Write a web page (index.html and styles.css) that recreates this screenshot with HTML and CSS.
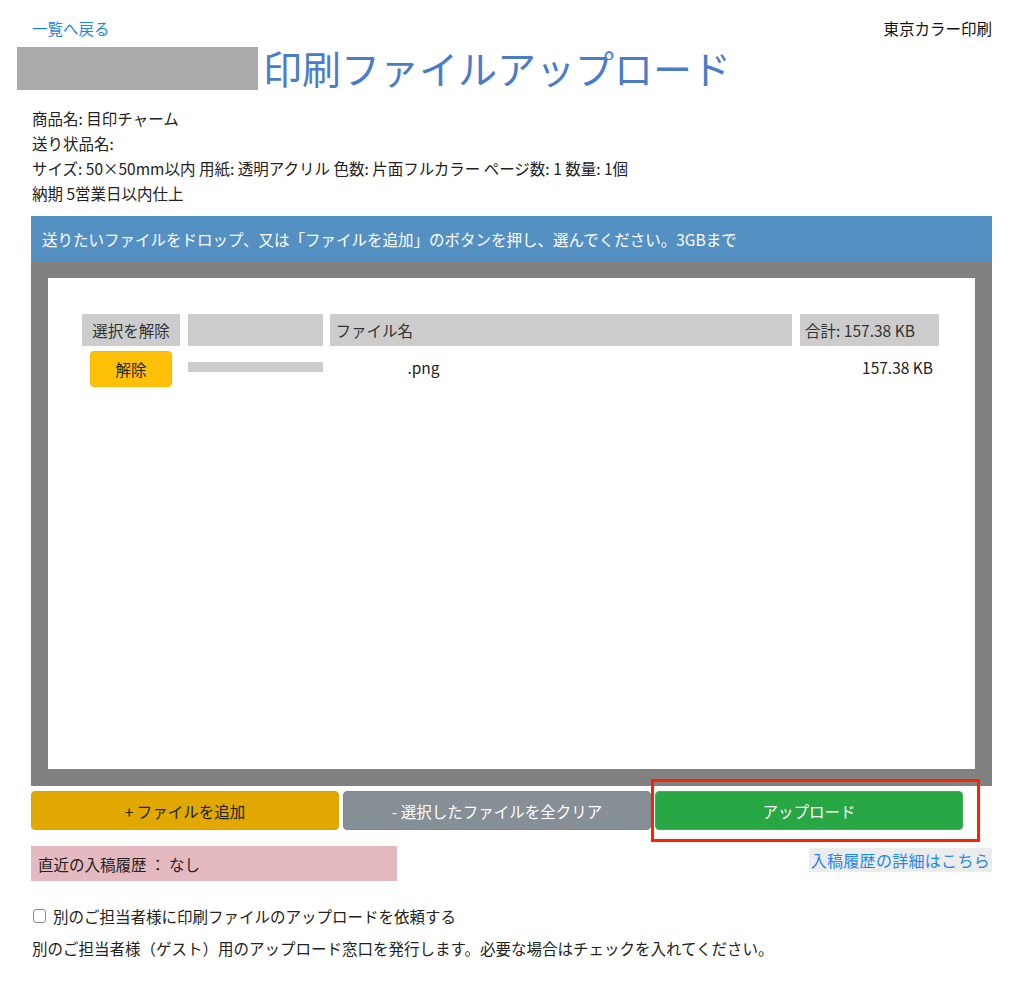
FILE: index.html
```html
<!DOCTYPE html>
<html lang="ja">
<head>
  <meta charset="UTF-8">
  <meta name="viewport" content="width=device-width, initial-scale=1.0">
  <title>印刷ファイルアップロード</title>
  <link rel="stylesheet" href="styles.css">
</head>
<body>
  <div class="page">
    <div class="topbar">
      <a class="back-link" href="#">一覧へ戻る</a>
      <span class="shop-name">東京カラー印刷</span>
    </div>

    <h1 class="title">
      <span class="title-mask"></span>
      <span class="title-text">印刷ファイルアップロード</span>
    </h1>

    <div class="order-info">
      <p>商品名: 目印チャーム</p>
      <p>送り状品名:</p>
      <p>サイズ: 50×50mm以内 用紙: 透明アクリル 色数: 片面フルカラー ページ数: 1 数量: 1個</p>
      <p>納期 5営業日以内仕上</p>
    </div>

    <div class="drop-notice">送りたいファイルをドロップ、又は「ファイルを追加」のボタンを押し、選んでください。3GBまで</div>

    <div class="drop-frame">
      <div class="drop-area">
        <div class="file-table">
          <div class="cell head head-center">選択を解除</div>
          <div class="cell head"></div>
          <div class="cell head">ファイル名</div>
          <div class="cell head">合計: 157.38 KB</div>

          <div class="cell row-center"><button class="btn-remove">解除</button></div>
          <div class="cell file-cell"><span class="thumb-mask"></span></div>
          <div class="cell file-cell"><span class="name-mask"></span>.png</div>
          <div class="cell file-cell size">157.38 KB</div>
        </div>
      </div>
    </div>

    <div class="actions">
      <button class="btn btn-add">+ ファイルを追加</button>
      <button class="btn btn-clear">- 選択したファイルを全クリア</button>
      <button class="btn btn-upload">アップロード</button>
      <span class="highlight"></span>
    </div>

    <div class="history">
      <div class="history-box">直近の入稿履歴 ： なし</div>
      <a class="history-link" href="#">入稿履歴の詳細はこちら</a>
    </div>

    <label class="guest-check">
      <input type="checkbox">
      <span>別のご担当者様に印刷ファイルのアップロードを依頼する</span>
    </label>
    <p class="guest-note">別のご担当者様（ゲスト）用のアップロード窓口を発行します。必要な場合はチェックを入れてください。</p>
  </div>
</body>
</html>
```

FILE: styles.css
```css
* {
  box-sizing: border-box;
  margin: 0;
  padding: 0;
}

body {
  font-family: "Noto Sans CJK JP", "Noto Sans", sans-serif;
  font-size: 15.5px;
  color: #222;
  background: #fff;
}

.page {
  padding: 18px 32px 0 31px;
}

.topbar {
  display: flex;
  justify-content: space-between;
  align-items: center;
  height: 20px;
  line-height: 20px;
}

.back-link {
  color: #1f86ee;
  text-decoration: none;
  margin-left: 1px;
}

.shop-name {
  color: #111;
}

.title {
  display: flex;
  align-items: center;
  gap: 5px;
  margin: 9px 0 0 -14px;
  height: 43px;
  font-size: 39px;
  font-weight: normal;
  line-height: 43px;
  color: #4a7cc8;
}

.title-mask {
  display: block;
  width: 241px;
  height: 43px;
  background: #aaaaaa;
}

.title-text {
  position: relative;
  top: -1px;
}

.order-info {
  margin-top: 16px;
  padding-left: 1px;
}

.order-info p {
  line-height: 25px;
}

.drop-notice {
  margin-top: 10px;
  height: 46px;
  line-height: 46px;
  padding-left: 11px;
  background: #5590c3;
  color: #fff;
}

.drop-frame {
  background: #818181;
  padding: 16px 17px 17px 17px;
}

.drop-area {
  background: #fff;
  height: 491px;
  padding: 36px 0 0 34px;
}

.file-table {
  display: grid;
  grid-template-columns: 98px 135px 462px 139px;
  column-gap: 7.7px;
  row-gap: 5px;
  grid-template-rows: 32px 36px;
}

.cell {
  display: flex;
  align-items: center;
  padding: 0 5px;
}

.file-cell {
  padding-bottom: 4px;
}

.head {
  background: #cccccc;
  color: #333;
}

.head-center,
.row-center {
  justify-content: center;
}

.btn-remove {
  width: 82px;
  height: 36px;
  border: 1px solid #f5b800;
  border-radius: 4px;
  background: #ffc107;
  color: #222;
  font: inherit;
}

.thumb-mask {
  display: block;
  width: calc(100% + 10px);
  margin: 0 -5px;
  height: 10px;
  background: #cccccc;
}

.name-mask {
  display: inline-block;
  width: 72px;
}

.size {
  justify-content: flex-end;
  padding-right: 6px;
}

.actions {
  position: relative;
  display: flex;
  gap: 4px;
  margin-top: 5px;
}

.btn {
  width: 308px;
  height: 39px;
  border: 1px solid transparent;
  border-radius: 4px;
  font: inherit;
  color: #fff;
}

.btn-add {
  background: #e0a800;
  border-color: #d9a406;
  color: #222;
}

.btn-clear {
  background: #868e96;
  border-color: #7f878f;
}

.btn-upload {
  background: #28a745;
  border-color: #3cb35a;
}

/* annotation frame around the upload button */
.highlight {
  position: absolute;
  left: 620px;
  top: -12px;
  width: 329px;
  height: 63px;
  border: 3px solid #ff2200;
  pointer-events: none;
}

.history {
  display: flex;
  justify-content: space-between;
  align-items: flex-start;
  margin-top: 16px;
}

.history-box {
  width: 366px;
  height: 35px;
  line-height: 37px;
  padding-left: 7px;
  background: #e5b9c0;
  color: #222;
}

.history-link {
  margin-top: 2px;
  height: 24px;
  line-height: 24px;
  padding: 0 2px;
  background: #ececec;
  color: #1f86ee;
  text-decoration: none;
  font-size: 16px;
  letter-spacing: 0.3px;
}

.guest-check {
  display: flex;
  align-items: center;
  gap: 7px;
  margin-top: 25px;
  padding-left: 2px;
  line-height: 20px;
}

.guest-check input {
  appearance: none;
  width: 13px;
  height: 14px;
  border: 1px solid #8a8a8a;
  border-radius: 3px;
  background: #fff;
}

.guest-note {
  margin-top: 12px;
  padding-left: 1px;
  line-height: 20px;
}
```
